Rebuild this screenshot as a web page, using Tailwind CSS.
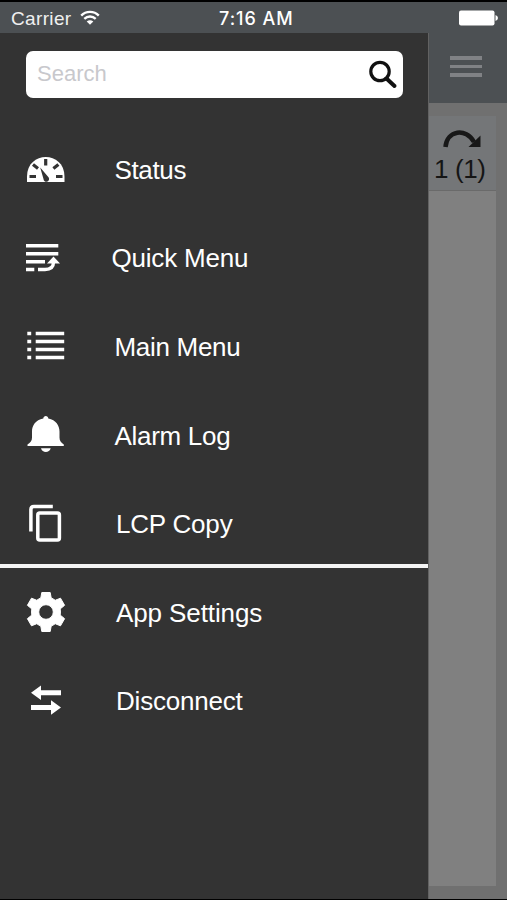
<!DOCTYPE html>
<html lang="en">
<head>
<meta charset="utf-8">
<title>Menu</title>
<script src="https://cdn.jsdelivr.net/npm/@tailwindcss/browser@4"></script>
</head>
<body class="bg-black">
<div class="w-[507px] h-[900px] flex flex-col bg-black pt-[2px] pb-[1px] overflow-hidden font-['Liberation_Sans',Arial,sans-serif]">
  <header class="h-[31px] shrink-0 bg-[#4c5053] flex items-center justify-between pl-[11px] pr-[9px] text-white relative">
    <div class="flex items-center gap-[8px]">
      <span class="text-[19px] leading-[31px] tracking-[0.35px] text-[#f0f0f0] pt-[1px]">Carrier</span>
      <svg class="w-[20px] h-[16px]" viewBox="0 0 20 16" fill="none" stroke="#fff" stroke-width="2.3"><path d="M1.2 5.6C6 .6 14 .6 18.800 5.600M4.300 8.900C7.600 5.700 12.400 5.700 15.700 8.900"/><path d="M10 14.800L6.700 11.400Q10 8.900 13.300 11.400Z" fill="#fff" stroke="none"/></svg>
    </div>
    <span class="absolute left-[219px] top-[1px] font-['Inter','Liberation_Sans',sans-serif] font-medium text-[18px] tracking-[0.95px] leading-[31px] whitespace-nowrap">7:16 AM</span>
    <svg class="w-[39px] h-[16px]" viewBox="0 0 39 16" fill="#fff"><rect x="0" y="0.500" width="35.500" height="15" rx="2"/><path d="M36.500 5Q39 6 39 8T36.500 11Z"/></svg>
  </header>
  <div class="flex flex-1 min-h-0">
    <nav class="w-[428px] shrink-0 bg-[#333333] flex flex-col">
      <div class="ml-[26px] mt-[18px] mb-[28px] w-[377px] h-[47px] shrink-0 rounded-[7px] bg-white flex items-center justify-between pl-[11px] pr-[5px]">
        <span class="text-[22px] leading-[44px] text-[#c8c8cc] pb-[2px]">Search</span>
        <svg class="w-[30px] h-[30px]" viewBox="0 0 30 30" fill="none" stroke="#111"><circle cx="12" cy="11.500" r="9.200" stroke-width="3.200"/><path d="M18.500 18.500L26.500 26" stroke-width="4" stroke-linecap="round"/></svg>
      </div>
      <ul class="flex flex-col text-[26px] leading-[30px] text-white whitespace-nowrap tracking-[-0.2px]">
        <li class="h-[88.500px] flex items-center pl-[20px]">
          <svg class="w-[48px] h-[48px] mr-[46px]" viewBox="0 0 48 48"><path fill="#fff" d="M7 36V30.500C7 4.500 44.500 4.500 44.500 30.500V36Z"/><g stroke="#333" stroke-width="3.200"><path d="M9.500 30.500H16M36 30.500H42.500M25.700 13V19.500M13 18.500L18 22.500M38.400 18.500L33.400 22.500"/></g><path fill="#333" d="M20.200 21.500L28.700 31.500A2.800 2.800 0 1 1 23.500 33Z"/></svg>
          <span class="tracking-[-0.35px] pl-[0.500px]">Status</span>
        </li>
        <li class="h-[88.500px] flex items-center pl-[20px] pb-[1px]">
          <svg class="w-[48px] h-[48px] mr-[43px]" viewBox="0 0 48 48" fill="none" stroke="#fff" stroke-width="3.400"><path d="M6 11.800H38.300M6 19.700H38.300M6 27.800H25M6 35.500H14.300M18 35.500H25C30.500 35.500 33.500 33 33.500 28"/><path fill="#fff" stroke="none" d="M27 29.500L33.500 22.500L40 29.500Z"/></svg>
          <span class="pl-[0.500px]">Quick Menu</span>
        </li>
        <li class="h-[88.500px] flex items-center pl-[20px]">
          <svg class="w-[48px] h-[48px] mr-[46px]" viewBox="0 0 48 48" stroke="#fff" stroke-width="3.600"><path d="M7.300 10.500H11.200M7.300 18.500H11.200M7.300 26.500H11.200M7.300 34.500H11.200M15.700 10.500H44.200M15.700 18.500H44.200M15.700 26.500H44.200M15.700 34.500H44.200"/></svg>
          <span class="pl-[0.500px] tracking-[-0.3px]">Main Menu</span>
        </li>
        <li class="h-[88.500px] flex items-center pl-[20px]">
          <svg class="w-[48px] h-[48px] mr-[46px]" viewBox="0 0 48 48" fill="#fff"><path d="M23.300 6.500C23.300 3 28.300 3 28.300 6.500C36 8 39.500 13.500 39.500 19.500V25.500C39.500 29 41 30.500 43.800 32.500V34H7.500V32.500C10.500 30.500 12 29 12 25.500V19.500C12 13.500 15.500 8 23.300 6.500ZM21 36.300H30.700C29.500 41.300 22.200 41.300 21 36.300Z"/></svg>
          <span class="pl-[0.500px] tracking-[-0.3px]">Alarm Log</span>
        </li>
        <li class="h-[88.500px] flex items-center pl-[20px]">
          <svg class="w-[48px] h-[48px] mr-[48px]" viewBox="0 0 48 48" fill="none" stroke="#fff" stroke-width="3.500"><path d="M10.900 31.500V9.500Q10.900 6.500 13.900 6.500H32.800"/><rect x="17.800" y="12.900" width="21.600" height="27" rx="2"/></svg>
          <span>LCP Copy</span>
        </li>
        <li class="h-[88.500px] flex items-center pl-[20px] relative">
          <div class="absolute left-0 top-[-4.500px] w-[428px] h-[4px] bg-[#f4f4f4]"></div>
          <svg class="w-[48px] h-[48px] mr-[48px]" viewBox="0 0 48 48" fill="#fff" stroke="#fff" stroke-width="1" stroke-linejoin="round"><path fill-rule="evenodd" d="M21.800 3.500H30.200L31.200 9Q33.300 9.800 35.200 11.300L40.500 9.200L44.600 16.300L40.200 19.900Q40.700 23 40.200 26.100L44.600 29.700L40.500 36.800L35.200 34.700Q33.300 36.200 31.200 37L30.200 42.500H21.800L20.800 37Q18.700 36.200 16.800 34.700L11.500 36.800L7.400 29.700L11.800 26.100Q11.300 23 11.800 19.900L7.400 16.300L11.500 9.200L16.800 11.300Q18.700 9.800 20.800 9ZM26 15.700A7.300 7.300 0 1 0 26 30.300A7.300 7.300 0 1 0 26 15.700Z"/></svg>
          <span class="tracking-[-0.1px]">App Settings</span>
        </li>
        <li class="h-[88.500px] flex items-center pl-[20px]">
          <svg class="w-[48px] h-[48px] mr-[48px]" viewBox="0 0 48 48" fill="#fff"><path d="M11 15.800L21 8.500V13.300H41V18.300H21V23ZM41 30.500L31 23.300V28H11V33H31V37.700Z"/></svg>
          <span>Disconnect</span>
        </li>
      </ul>
    </nav>
    <main class="flex-1 bg-[#707070] flex flex-col border-l border-[#626262]">
      <div class="h-[70px] shrink-0 bg-[#4c5053] pl-[21px] pt-[23px] flex flex-col gap-[5px]">
        <div class="w-[32px] h-[3.500px] bg-[#808285]"></div>
        <div class="w-[32px] h-[3.500px] bg-[#808285]"></div>
        <div class="w-[32px] h-[3.500px] bg-[#808285]"></div>
      </div>
      <div class="mt-[13px] w-[67px] h-[74px] shrink-0 bg-[#747678] flex flex-col text-[#151515]">
        <svg class="w-[42px] h-[22px] mt-[12px] ml-[11px]" viewBox="0 0 42 22"><path d="M5.500 19C7 2 26 -.5 34 14" fill="none" stroke="#181818" stroke-width="4.500"/><path d="M40.500 7.500V19H28.500Z" fill="#181818"/></svg>
        <span class="text-[26px] leading-[30px] whitespace-nowrap mt-[4px] ml-[5px] tracking-[-0.4px]">1 (1)</span>
      </div>
      <div class="w-[67px] h-[696px] shrink-0 bg-[#808080] border-t border-[#6a6a6a]"></div>
    </main>
  </div>
</div>
</body>
</html>
